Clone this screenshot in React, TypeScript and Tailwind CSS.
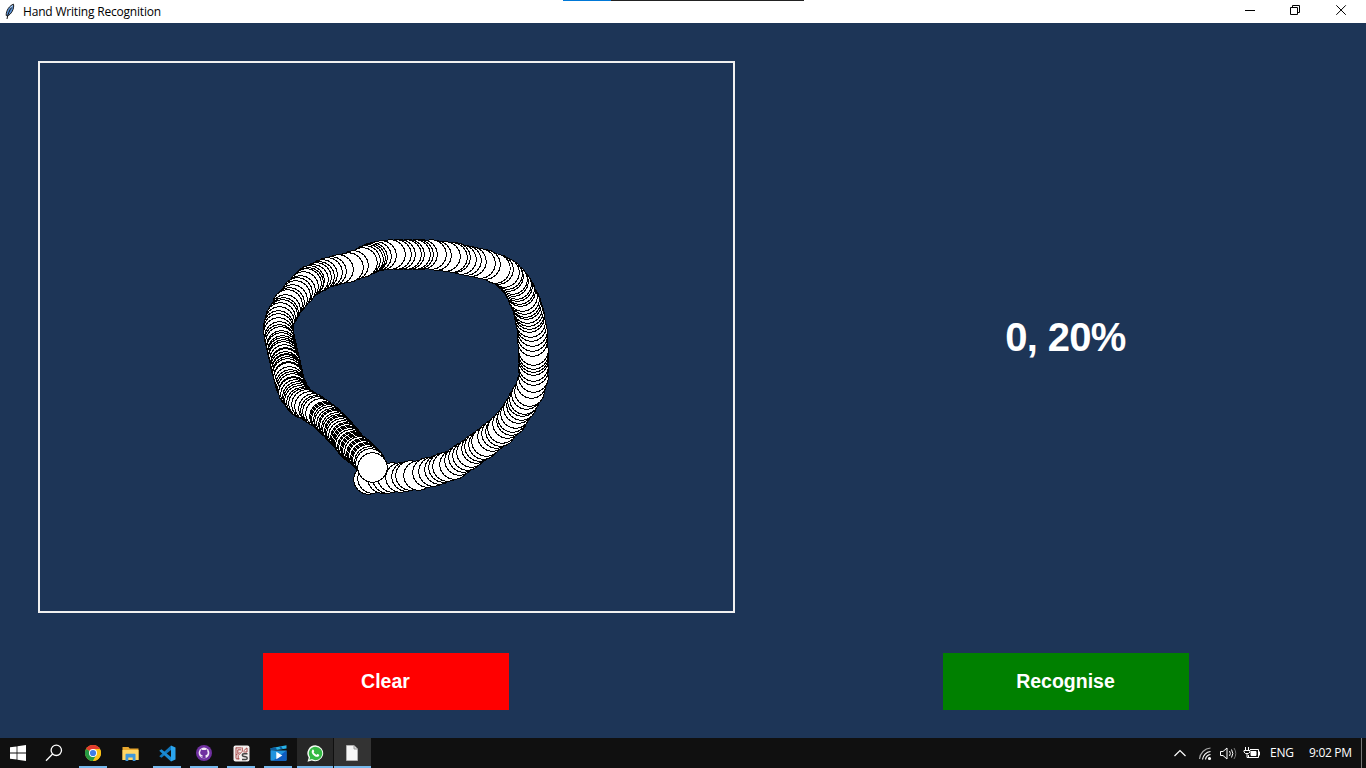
import type { ReactNode } from "react";

// Stroke vertices: x, y, number of brush stamps up to the next vertex
const STROKE: [number, number, number][] = [
  [368, 479, 2], [382, 478.5, 3], [400, 477, 3], [418, 475, 2], [433, 471.5, 4], [454, 464, 3],
  [467, 455, 4], [483, 444, 4], [500, 431, 3], [511, 420, 4], [521, 405, 4], [529, 391, 2],
  [533, 377, 2], [533.5, 366, 4], [533.5, 350, 2], [532.5, 336, 2], [531.5, 326, 3], [529, 314, 4],
  [525.5, 302, 4], [519, 289, 4], [512, 279, 3], [504, 272, 2], [495, 268, 2], [480, 263, 2],
  [466, 260, 3], [452, 257, 2], [436, 255, 2], [422, 254.5, 4], [406, 254, 3], [390, 254, 2],
  [376, 256, 5], [362, 262, 2], [348, 267, 2], [331, 271, 3], [319, 276, 4], [308, 282, 3],
  [300, 290, 3], [292, 299, 3], [285, 309, 4], [279, 321, 3], [278.5, 332, 4], [281, 345, 7],
  [285, 362, 7], [288, 376, 6], [293, 391, 6], [301, 402, 4], [313, 408, 4], [324, 416, 8],
  [336, 427, 6], [345, 437, 6], [352, 446, 6], [361, 453, 6], [369, 461, 2], [372.5, 467.5, 1],
];

const stamps = STROKE.flatMap(([x, y, n], i) => {
  const [nx, ny] = STROKE[i + 1] ?? [x, y];
  return Array.from({ length: n }, (_, k) => {
    const wobble = k === 0 ? 0 : Math.sin(i * 7 + k * 5) * 0.3;
    const t = (k + wobble) / n;
    return { x: Math.floor(x + (nx - x) * t) + 0.5, y: Math.floor(y + (ny - y) * t) + 0.5 };
  });
});

function Task({ children, running, tone = "" }: { children?: ReactNode; running?: boolean; tone?: string }) {
  return (
    <div className={`relative flex h-[30px] w-[37px] items-center justify-center ${tone}`}>
      {children}
      {running && (
        <span className={`absolute bottom-0 h-[2px] bg-[#76b9ed] ${tone ? "inset-x-0" : "left-[4px] w-[28px]"}`} />
      )}
    </div>
  );
}

const Windows = () => (
  <svg className="mr-[3px]" width="16" height="16" viewBox="0 0 16 16" fill="#fff">
    <path d="M0 2.3 6.6 1.4V7.6H0zM7.4 1.3 16 0V7.6H7.4zM0 8.4H6.6V14.6L0 13.7zM7.4 8.4H16V16L7.4 14.7z" />
  </svg>
);

const Search = () => (
  <svg className="mr-[5px]" width="18" height="18" viewBox="0 0 18 18" fill="none" stroke="#fff" strokeWidth="1.3">
    <circle cx="11.3" cy="6.3" r="5.2" />
    <path d="M7.6 10 1 16.8" />
  </svg>
);

const Chrome = () => (
  <svg className="mr-px" width="16" height="16" viewBox="0 0 16 16">
    <circle cx="8" cy="8" r="8" fill="#fbc116" />
    <path d="M8 8 1.07 4A8 8 0 0 1 14.93 4z" fill="#e33b2e" />
    <path d="M8 8 1.07 4A8 8 0 0 0 8 16l3.2-6z" fill="#269a42" />
    <path d="M8 4H14.93A8 8 0 0 1 8 16L11.5 10z" fill="#fbc116" />
    <circle cx="8" cy="8" r="4" fill="#fff" />
    <circle cx="8" cy="8" r="3.1" fill="#3f7de8" />
  </svg>
);

const Explorer = () => (
  <svg width="17" height="15" viewBox="0 0 17 15">
    <path d="M.5 1h6l1.2 1.5h8.8V14H.5z" fill="#e9a82e" />
    <path d="M.5 4h16v10H.5z" fill="#ffd666" />
    <path d="M3.5 15V8.5q0-.8.8-.8h8.4q.8 0 .8.8V15h-2.8v-3.5H6.3V15z" fill="#3e97db" />
  </svg>
);

const Code = () => (
  <svg className="mr-px" width="17" height="17" viewBox="0 0 17 17">
    <path d="M12 .5 16.5 2.5v12L12 16.5z" fill="#2ba5ee" />
    <path d="M12 .5v4.4L2.5 12.8.5 11.5V11z" fill="#1177bd" />
    <path d="M12 16.5v-4.4L2.5 4.2.5 5.5V6z" fill="#1b8bd4" />
  </svg>
);

const GitHub = () => (
  <svg className="mr-px" width="16" height="16" viewBox="0 0 16 16">
    <circle cx="8" cy="8" r="8" fill="#7030a0" />
    <circle cx="8" cy="8" r="5.4" fill="#f3eaf7" />
    <path d="M5 4.2 6.5 5h3L11 4.2q.5 1 .2 1.8 1.6 3.6-1.9 4.4.5.6.4 3H6.4v-1.2q-1.5.2-2-1.1.9.1 1.3.5.5.1.8-.2 0-.7.3-1C3.4 9.6 4 6.6 4.8 6q-.3-.8.2-1.8z" fill="#7030a0" />
  </svg>
);

const Snip = () => (
  <svg className="mr-px" width="17" height="17" viewBox="0 0 17 17">
    <rect x=".5" y=".5" width="16" height="16" rx="2" fill="#f3efee" />
    <path d="M3 2.5v11M3 2.9h5.5M4.8 8V4.8H8M5.2 14.5V10.5L9 6.5M9.3 2.5v4M10.5 6l3.5-3.2M10.5 7h3.5V3M3 13.8h3.5M3 10l3.5-2.5" stroke="#a84848" strokeWidth="1" fill="none" />
    <path d="M14.5 8.7H11q-1.7 0-1.7 1.3 0 1.2 1.7 1.5l1.8.3q1.4.3 1.4 1.4 0 1.3-1.7 1.3H9" stroke="#444" strokeWidth="1.5" fill="none" />
  </svg>
);

const Movies = () => (
  <svg className="mr-px" width="17" height="16" viewBox="0 0 17 16">
    <path d="M.5 3.2 16.5.3V3.5L1 5.8z" fill="#26b2e8" />
    <path d="m.5 3.2 5-.9 1.7 2.5L.8 5.7zM9 1.6l2-.3 1.8 2.6-2 .3z" fill="#0e5c9c" />
    <path d="M.5 5.5h16V15q0 .7-.7.7H1.2q-.7 0-.7-.7z" fill="#2094de" />
    <path d="M16.5 5.5V15q0 .7-.7.7H3z" fill="#0f5cc0" />
    <path d="m6.3 6.7 6 3.8-6 3.8z" fill="#fff" />
  </svg>
);

const WhatsApp = () => (
  <svg width="17" height="17" viewBox="0 0 17 17">
    <path d="M8.5.3a8 8 0 1 1-3.8 15.2L.5 16.7l1.2-4A8 8 0 0 1 8.5.3z" fill="#f4fbf4" />
    <path d="M8.5 1.7a6.7 6.7 0 1 1-3.5 12.4l-2.6.7.7-2.5A6.7 6.7 0 0 1 8.5 1.7z" fill="#34b944" />
    <path d="M5.3 4.9c.5-.7 1.2-.5 1.4.1l.5 1.2c.1.4-.4.8-.6 1.1.7 1.3 1.5 2 2.9 2.6.4-.3.7-1 1.1-.9l1.5.8c.4.3-.1 1.6-1 1.9-2.6.9-6.7-2.8-6.4-5.3.1-.6.3-1.1.6-1.5z" fill="#fff" />
  </svg>
);

const FileIcon = () => (
  <svg className="mr-px" width="12" height="16" viewBox="0 0 12 16">
    <path d="M.5.5h7.5L11.500 4v11.5H.5z" fill="#f6f6f6" stroke="#b8b8b8" strokeWidth=".8" />
    <path d="M8 .5V4h3.5" fill="#dcdcdc" stroke="#888" strokeWidth=".8" />
  </svg>
);

export default function App() {
  return (
    <div className="flex h-[768px] w-[1366px] flex-col overflow-hidden bg-[#1d3557] font-['Open_Sans','Noto_Sans',sans-serif]">
      <header className="relative flex h-[23px] shrink-0 items-center justify-between bg-white">
        <div className="flex items-center">
          <svg className="ml-[4px]" width="12" height="17" viewBox="0 0 12 17">
            <path d="M9.5 1.2C5.5 2.5 2 7.5 2.2 12.5L3.5 13C7 11.5 10.5 6 9.5 1.2z" fill="#5b93d8" stroke="#1b1b1b" strokeWidth="1" />
            <path d="M8 4C5.5 7 3.8 11 3 16" stroke="#111" strokeWidth="1" fill="none" />
            <path d="M8.5 2.5 6.5 5" stroke="#cfe2f8" strokeWidth="1" />
          </svg>
          <h1 className="ml-[7px] text-[12px] leading-[23px] tracking-[-0.19px] text-black">Hand Writing Recognition</h1>
        </div>
        <div className="absolute left-[563px] top-0 flex h-px w-[241px] bg-[#222]">
          <div className="w-[48px] bg-[#0078d7]" />
        </div>
        <svg width="140" height="23" viewBox="0 0 140 23" fill="none" stroke="#000" strokeWidth="1">
          <path d="M19 10.5h10" />
          <path d="M64.5 7.5h7v7h-7zM66.5 7V5.5h7v7H72" />
          <path d="m110.3 5.3 9.5 9.5m0-9.5-9.5 9.5" />
        </svg>
      </header>

      <main className="grid h-[715px] shrink-0 grid-cols-[773px_1fr]">
        <section className="flex flex-col pl-[38px] pt-[38px]">
          <div className="h-[552px] w-[697px] border-2 border-[#f0f0f0]">
            <svg width="693" height="548" viewBox="40 63 693 548" shapeRendering="crispEdges">
              {stamps.map((s, i) => (
                <circle key={i} cx={s.x} cy={s.y} r="14.75" fill="#fff" stroke="#000" strokeWidth="1" />
              ))}
            </svg>
          </div>
          <button className="ml-[225px] mt-[40px] h-[57px] w-[246px] bg-[#ff0000] pr-px font-['Liberation_Sans',Arial,sans-serif] text-[19.5px] font-bold text-white">
            Clear
          </button>
        </section>
        <section className="flex flex-col items-center pr-[8px] font-['Liberation_Sans',Arial,sans-serif] font-bold text-white">
          <output className="flex h-[630px] items-center pb-[2px] text-[40px] tracking-[-0.7px]">0, 20%</output>
          <button className="h-[57px] w-[246px] bg-[#008000] text-[19.5px]">Recognise</button>
        </section>
      </main>

      <footer className="flex h-[30px] shrink-0 items-center justify-between bg-[#101010] text-white">
        <div className="flex items-center pl-px">
          <Task><Windows /></Task>
          <Task><Search /></Task>
          <Task running><Chrome /></Task>
          <Task><Explorer /></Task>
          <Task running><Code /></Task>
          <Task running><GitHub /></Task>
          <Task running><Snip /></Task>
          <Task running><Movies /></Task>
          <Task running tone="bg-[#272727] border-r border-[#101010]"><WhatsApp /></Task>
          <Task running tone="bg-[#333333]"><FileIcon /></Task>
        </div>
        <div className="flex h-full items-center text-[12px]">
          <svg width="92" height="30" viewBox="0 0 92 30" fill="none" stroke="#fff">
            <path d="m4.5 18 5.5-5.5 5.5 5.5" strokeWidth="1.2" />
            <g strokeWidth="1.2">
              <path d="M29.5 21a12 12 0 0 1 11-11" stroke="#aaa" />
              <path d="M32.5 21.5a9 9 0 0 1 8-8" />
              <path d="M35.5 21.5a6 6 0 0 1 5-5" />
              <circle cx="39.5" cy="20.5" r="1" fill="#fff" />
            </g>
            <path d="M50.5 13.5h2.5l4-3.5v11l-4-3.5h-2.5zM59.5 13q1.7 2.500 0 5M61.5 11.5q2.7 4 0 8" />
            <path d="M64 10q3.5 5.5 0 11" stroke="#777" />
            <path d="M80 11.5h8.5v8H78.5V17M89.5 13.5v4" />
            <path d="M81 13.5h5v4H81z" fill="#fff" />
            <path d="M75.500 9v3m3-3v3M74 12.5h6v1.5l-1.5 1.5h-3L74 14zM77 16v3.5h2" />
          </svg>
          <span className="ml-[8px] w-[39px] tracking-[-0.2px]">ENG</span>
          <span className="w-[52px] whitespace-nowrap tracking-[-0.3px]">9:02 PM</span>
          <span className="h-full w-px bg-[#777]" />
          <span className="w-[4px]" />
        </div>
      </footer>
    </div>
  );
}
